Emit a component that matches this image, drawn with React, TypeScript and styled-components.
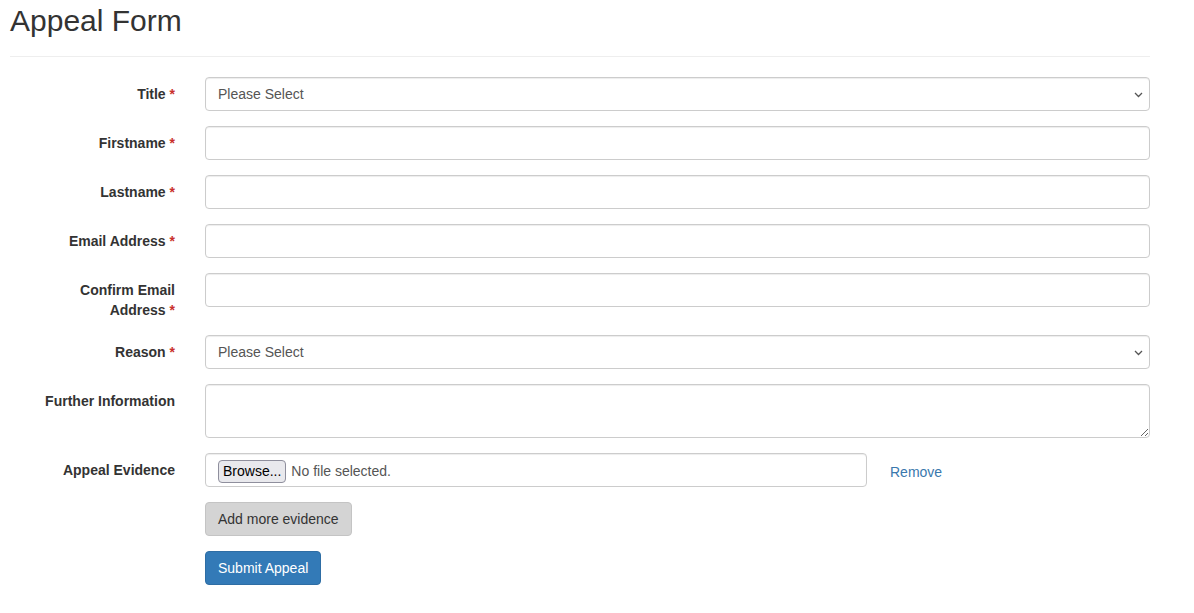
import React from "react";
import styled, { createGlobalStyle } from "styled-components";

const Global = createGlobalStyle`
  html, body { margin: 0; padding: 0; background: #fff; }
  body {
    font-family: "Liberation Sans", Arial, Helvetica, sans-serif;
    font-size: 14px;
    line-height: 20px;
    color: #333;
  }
  * { box-sizing: border-box; }
`;

const Page = styled.div`
  width: 1140px;
  margin-left: 10px;
  padding-top: 4px;
`;

const Header = styled.h1`
  margin: 0 0 20px 0;
  padding-bottom: 19px;
  border-bottom: 1px solid #eee;
  font-size: 30px;
  font-weight: 500;
  line-height: 33px;
  color: #333;
`;

const Form = styled.form`
  display: flex;
  flex-direction: column;
`;

const Row = styled.div`
  display: grid;
  grid-template-columns: 165px 945px;
  column-gap: 30px;
  margin-bottom: 15px;
`;

const Label = styled.label`
  text-align: right;
  font-weight: 700;
  padding-top: 7px;
  line-height: 20px;
`;

const Req = styled.span`
  color: #c9302c;
`;

const Control = styled.div<{ $col?: number }>`
  grid-column: ${(p) => p.$col ?? 2};
  position: relative;
  display: flex;
  align-items: flex-start;
`;

const fieldBase = `
  width: 100%;
  height: 34px;
  padding: 6px 12px;
  font-family: "Liberation Sans", Arial, Helvetica, sans-serif;
  font-size: 14px;
  line-height: 20px;
  color: #555;
  background: #fff;
  border: 1px solid #ccc;
  border-radius: 4px;
  box-shadow: inset 0 1px 1px rgba(0,0,0,.075);
  outline: none;
`;

const Input = styled.input`
  ${fieldBase}
`;

const Select = styled.select`
  ${fieldBase}
  appearance: none;
  -webkit-appearance: none;
  padding-right: 30px;
`;

const Chevron = styled.svg`
  position: absolute;
  right: 7px;
  top: 15px;
  pointer-events: none;
`;

const TextArea = styled.textarea`
  ${fieldBase}
  height: 54px;
  resize: vertical;
  display: block;
`;

const FileBox = styled.label`
  ${fieldBase}
  width: 662px;
  display: flex;
  align-items: center;
  gap: 5px;
  padding: 2px 12px 0 12px;
  cursor: pointer;
`;

const HiddenFile = styled.input`
  display: none;
`;

const BrowseBtn = styled.span`
  display: inline-flex;
  align-items: center;
  height: 23px;
  padding: 0 4px;
  background: #e9e9ed;
  border: 1px solid #8f8f9d;
  border-radius: 4px;
  color: #000;
  font-size: 14px;
`;

const RemoveLink = styled.a`
  margin-left: 23px;
  padding-top: 9px;
  line-height: 20px;
  color: #3a78ad;
  text-decoration: none;
  cursor: pointer;
`;

const Button = styled.button<{ $variant: "gray" | "primary" }>`
  height: 34px;
  padding: 6px 12px;
  font-family: "Liberation Sans", Arial, Helvetica, sans-serif;
  font-size: 14px;
  line-height: 20px;
  border-radius: 4px;
  cursor: pointer;
  border: 1px solid ${(p) => (p.$variant === "primary" ? "#2e6da4" : "#c4c4c4")};
  background: ${(p) => (p.$variant === "primary" ? "#337ab7" : "#d4d4d4")};
  color: ${(p) => (p.$variant === "primary" ? "#fff" : "#333")};
`;

const ChevronIcon = () => (
  <Chevron width="9" height="6" viewBox="0 0 9 6">
    <path d="M1 1 L4.5 4.5 L8 1" fill="none" stroke="#555" strokeWidth="1.3" />
  </Chevron>
);

const TextRow = ({ label }: { label: React.ReactNode }) => (
  <Row>
    <Label>
      {label}
      <Req>{"\u00a0*"}</Req>
    </Label>
    <Control>
      <Input type="text" />
    </Control>
  </Row>
);

const SelectRow = ({ label }: { label: string }) => (
  <Row>
    <Label>
      {label}
      <Req>{"\u00a0*"}</Req>
    </Label>
    <Control>
      <Select defaultValue="">
        <option value="">Please Select</option>
      </Select>
      <ChevronIcon />
    </Control>
  </Row>
);

export default function App() {
  return (
    <>
      <Global />
      <Page>
        <Header>Appeal Form</Header>
        <Form onSubmit={(e) => e.preventDefault()}>
          <SelectRow label="Title" />
          <TextRow label="Firstname" />
          <TextRow label="Lastname" />
          <TextRow label="Email Address" />
          <TextRow
            label={
              <>
                Confirm Email
                <br />
                Address
              </>
            }
          />
          <SelectRow label="Reason" />
          <Row>
            <Label>Further Information</Label>
            <Control>
              <TextArea rows={2} />
            </Control>
          </Row>
          <Row>
            <Label>Appeal Evidence</Label>
            <Control>
              <FileBox>
                <HiddenFile type="file" />
                <BrowseBtn>Browse...</BrowseBtn>
                <span>No file selected.</span>
              </FileBox>
              <RemoveLink>Remove</RemoveLink>
            </Control>
          </Row>
          <Row>
            <Control $col={2}>
              <Button type="button" $variant="gray">Add more evidence</Button>
            </Control>
          </Row>
          <Row>
            <Control $col={2}>
              <Button type="submit" $variant="primary">Submit Appeal</Button>
            </Control>
          </Row>
        </Form>
      </Page>
    </>
  );
}
